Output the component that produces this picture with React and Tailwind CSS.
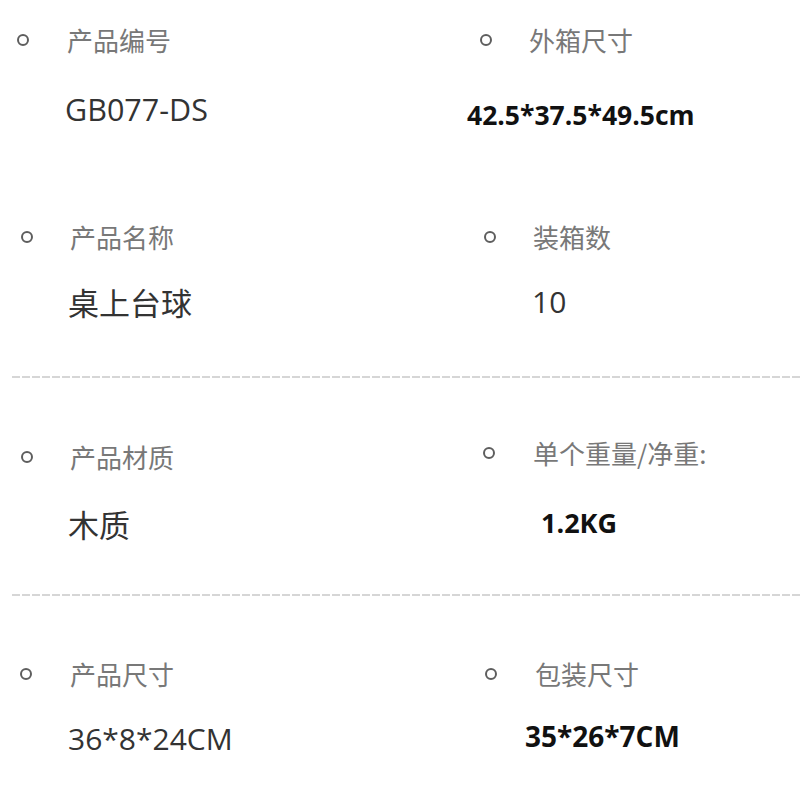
import React from "react";

const font = { fontFamily: '"Open Sans", "Noto Sans CJK SC", sans-serif' };

function Dot() {
  return <span className="block w-[12px] h-[12px] rounded-full border-[2.5px] border-[#5e5e5e] shrink-0" />;
}

function Label({ children, gap, pl }) {
  return (
    <div className={`flex items-center ${pl} ${gap}`}>
      <Dot />
      <span className="text-[26px] leading-[30px] text-[#787878] font-['Noto_Sans_CJK_SC',sans-serif] tracking-[0px]">
        {children}
      </span>
    </div>
  );
}

function Dashed() {
  return (
    <div className="ml-[12px] h-[2px] bg-[repeating-linear-gradient(to_right,#d6d6d6_0px,#d6d6d6_8px,transparent_8px,transparent_10px)]" />
  );
}

export default function App() {
  return (
    <div className="w-[800px] h-[793px] bg-white overflow-hidden font-['Open_Sans','Noto_Sans_CJK_SC',sans-serif]" style={font}>
      {/* Row 1 */}
      <div className="grid grid-cols-[462px_338px] h-[198px]">
        <div className="pt-[25px]">
          <Label pl="pl-[17px]" gap="gap-[38px]">产品编号</Label>
          <div className="mt-[34px] pl-[65px] text-[30.5px] leading-[40px] font-medium text-[#333]">GB077-DS</div>
        </div>
        <div className="pt-[25px]">
          <Label pl="pl-[18px]" gap="gap-[37px]">外箱尺寸</Label>
          <div className="mt-[45px] pl-[5px] text-[26.5px] leading-[30px] font-bold text-[#111]">42.5*37.5*49.5cm</div>
        </div>
      </div>
      {/* Row 2 */}
      <div className="grid grid-cols-[462px_338px] h-[178px]">
        <div className="pt-[24px]">
          <Label pl="pl-[21px]" gap="gap-[37px]">产品名称</Label>
          <div className="mt-[30px] pl-[68px] text-[31px] leading-[40px] text-[#333] font-['Noto_Sans_CJK_SC',sans-serif]">桌上台球</div>
        </div>
        <div className="pt-[24px]">
          <Label pl="pl-[22px]" gap="gap-[37px]">装箱数</Label>
          <div className="mt-[30px] pl-[70px] text-[30px] leading-[40px] font-medium text-[#333]">10</div>
        </div>
      </div>
      <Dashed />
      {/* Row 3 */}
      <div className="grid grid-cols-[462px_338px] h-[216px]">
        <div className="pt-[64px]">
          <Label pl="pl-[21px]" gap="gap-[37px]">产品材质</Label>
          <div className="mt-[32px] pl-[68px] text-[31px] leading-[40px] text-[#333] font-['Noto_Sans_CJK_SC',sans-serif]">木质</div>
        </div>
        <div className="pt-[60px]">
          <Label pl="pl-[21px]" gap="gap-[38px]">单个重量/净重:</Label>
          <div className="mt-[40px] pl-[79px] text-[27px] leading-[30px] font-bold text-[#111]">1.2KG</div>
        </div>
      </div>
      <Dashed />
      {/* Row 4 */}
      <div className="grid grid-cols-[462px_338px] h-[196px]">
        <div className="pt-[63px]">
          <Label pl="pl-[20px]" gap="gap-[38px]">产品尺寸</Label>
          <div className="mt-[30px] pl-[68px] text-[30px] leading-[40px] font-medium text-[#333]">36*8*24CM</div>
        </div>
        <div className="pt-[63px]">
          <Label pl="pl-[23px]" gap="gap-[38px]">包装尺寸</Label>
          <div className="mt-[32px] pl-[63px] text-[28px] leading-[30px] font-bold text-[#111]">35*26*7CM</div>
        </div>
      </div>
    </div>
  );
}
